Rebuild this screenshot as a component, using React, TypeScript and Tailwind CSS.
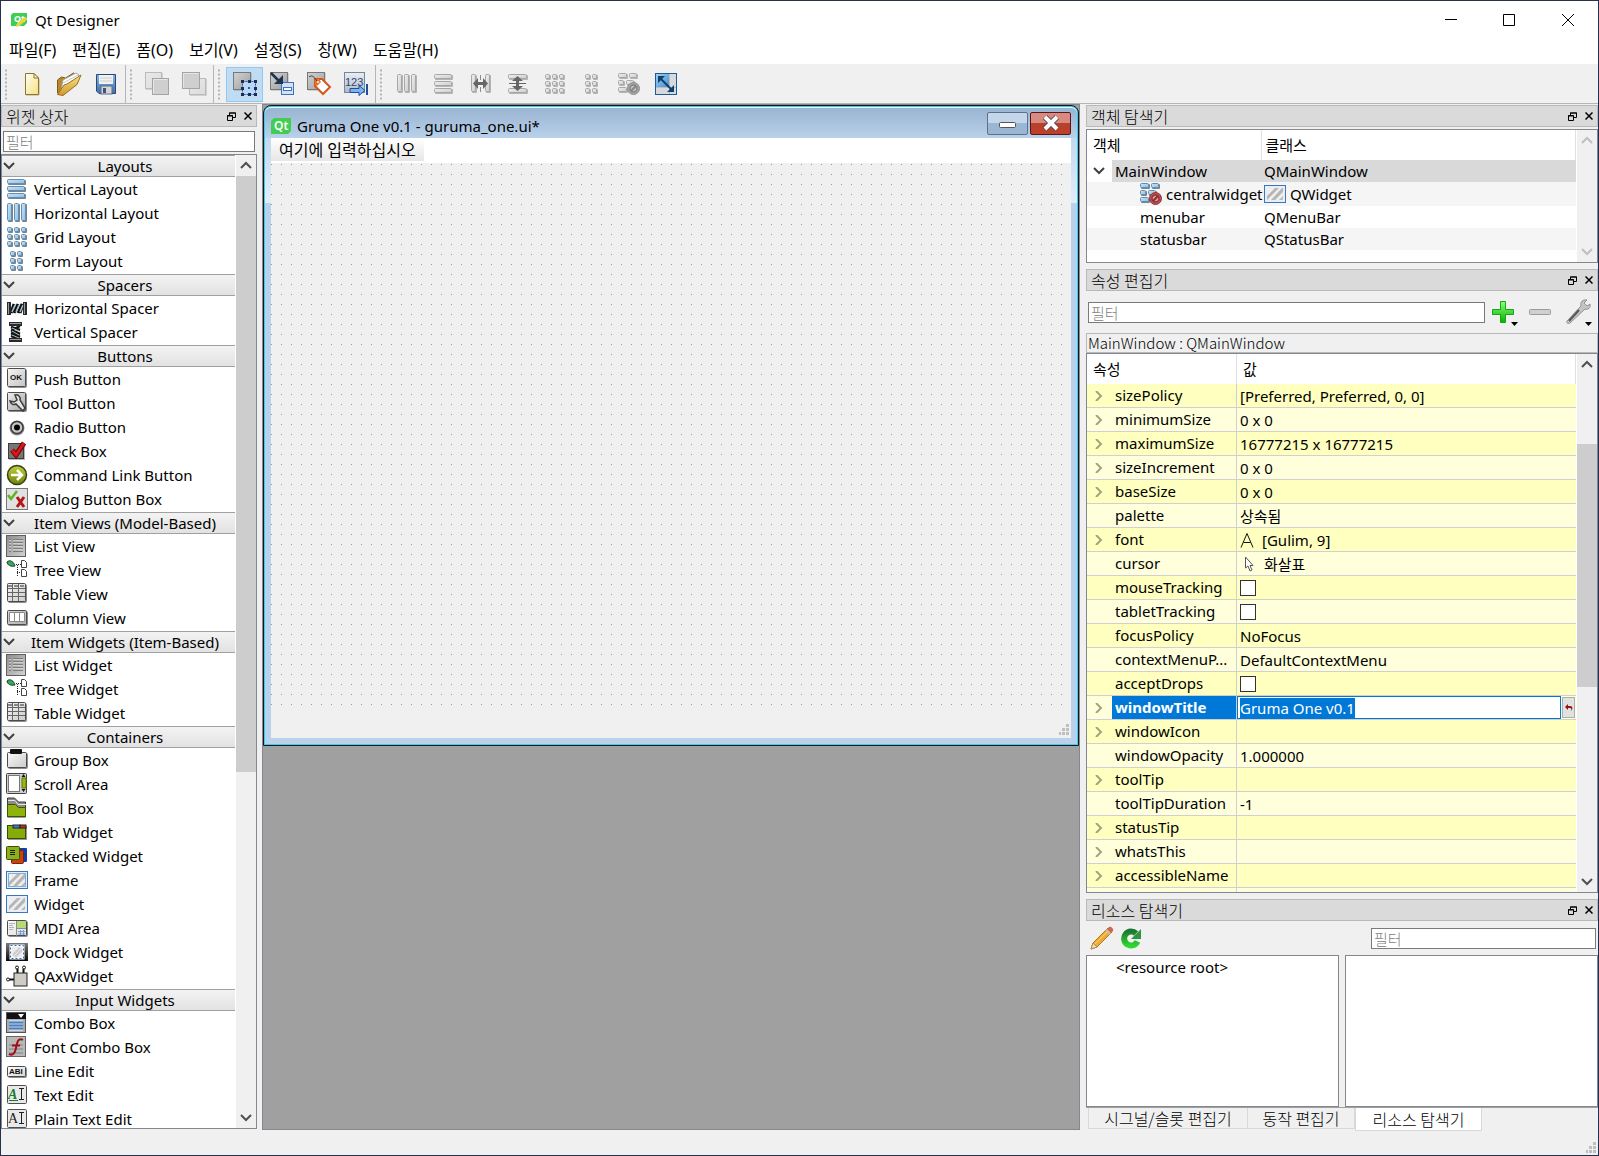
import { useEffect, useId, useRef, type ReactNode } from "react";

const ui = "font-['Noto_Sans','Noto_Sans_CJK_KR',sans-serif] text-[15px] leading-5";
const uiLarge = "font-['Noto_Sans','Noto_Sans_CJK_KR',sans-serif] text-base leading-5";
const thin = "font-['Noto_Sans_CJK_KR',sans-serif] font-light text-[15px] leading-5";
const thinLarge = "font-['Noto_Sans_CJK_KR',sans-serif] font-light text-base leading-5";

function Svg({ w = 22, h = 22, children, className = "" }: { w?: number; h?: number; children: ReactNode; className?: string }) {
  return (
    <svg width={w} height={h} viewBox={`0 0 ${w} ${h}`} className={`shrink-0 ${className}`} aria-hidden="true">
      {children}
    </svg>
  );
}

function Grad({ id, from, to, diagonal = false }: { id: string; from: string; to: string; diagonal?: boolean }) {
  return (
    <linearGradient id={id} x1="0" y1="0" x2={diagonal ? "1" : "0"} y2="1">
      <stop offset="0" stopColor={from} />
      <stop offset="1" stopColor={to} />
    </linearGradient>
  );
}

/* ---------- layout glyphs, shared by the toolbar and the widget box ---------- */

type Cell = [number, number, number, number];

function Cells({ cells, gray = false, children }: { cells: Cell[]; gray?: boolean; children?: ReactNode }) {
  const id = useId();
  return (
    <Svg>
      <Grad id={id} from={gray ? "#f0f0f0" : "#c6e6fa"} to={gray ? "#cccccc" : "#8abfea"} diagonal />
      {cells.map(([x, y, w, h]) => (
        <g key={`${x}-${y}`}>
          <rect x={x + 1} y={y + 1} width={w} height={h} rx="1" fill={gray ? "#b4b4b4" : "#77848f"} />
          <rect x={x + 0.5} y={y + 0.5} width={w - 1} height={h - 1} rx="1" fill={`url(#${id})`} stroke={gray ? "#a6a6a6" : "#6a8cab"} />
        </g>
      ))}
      {children}
    </Svg>
  );
}

const columns: Cell[] = [[1, 1, 5, 18], [8, 1, 5, 18], [15, 1, 5, 18]];
const rows: Cell[] = [[1, 1, 18, 5], [1, 8, 18, 5], [1, 15, 18, 5]];
const grid: Cell[] = [1, 8, 15].flatMap((y) => [1, 8, 15].map((x): Cell => [x, y, 5, 5]));
const form: Cell[] = [1, 8, 15].flatMap((y) => [4, 11].map((x): Cell => [x, y, 5, 5]));
const broken: Cell[] = [[0, 0, 9, 5], [11, 0, 8, 5], [0, 7, 6, 5], [8, 7, 8, 5], [0, 14, 9, 5]];

function Forbidden({ gray = false }: { gray?: boolean }) {
  return (
    <g>
      <circle cx="15.500" cy="15.500" r="6" fill={gray ? "#a9a9a9" : "#b5555a"} stroke={gray ? "#8c8c8c" : "#8c3237"} />
      <circle cx="15.500" cy="15.500" r="3.500" fill={gray ? "#c4c4c4" : "#d4a4a4"} stroke={gray ? "#858585" : "#a32f34"} strokeWidth="1.500" />
      <path d="M13 18 18 13" stroke={gray ? "#858585" : "#8a2c30"} strokeWidth="2" />
    </g>
  );
}

/* ---------- toolbar icons ---------- */

function GrayPane({ x, y, s, light = false }: { x: number; y: number; s: number; light?: boolean }) {
  const id = useId();
  return (
    <g>
      <Grad id={id} from={light ? "#e9e9e9" : "#d2d2d2"} to={light ? "#dcdcdc" : "#9e9e9e"} diagonal />
      <rect x={x + 1} y={y + 1} width={s} height={s} fill="#00000022" />
      <rect x={x + 0.5} y={y + 0.5} width={s - 1} height={s - 1} fill={`url(#${id})`} stroke={light ? "#bababa" : "#777777"} />
    </g>
  );
}

const NewIcon = () => (
  <Svg w={24} h={24}>
    <Grad id="paper" from="#fffef5" to="#f6e07c" diagonal />
    <path d="M5.500 1.500h8.500l4.500 4.500v16.500h-13z" fill="url(#paper)" stroke="#8d7526" />
    <path d="M14 1.500v4.500h4.500z" fill="#fff9d0" stroke="#8d7526" />
    <path d="M19.500 7v16M6 23.500h13" stroke="#d2cfc4" />
  </Svg>
);

const OpenIcon = () => (
  <Svg w={26} h={26}>
    <Grad id="folder" from="#f9e189" to="#d29a2c" />
    <path d="M1.500 22V9l4-3 4 1 8-5 3 2v5L7 24z" fill="#b8872c" stroke="#7e5b18" />
    <path d="M5 19 7 9 20 2l3 2-3 10z" fill="#fff" stroke="#a5a5a5" />
    <path d="M7 12 22 4" stroke="#c8c8c8" />
    <path d="M1.500 23.500 8 14l3-1 14-9-4 9.500L7 24.500z" fill="url(#folder)" stroke="#9a6e1d" />
  </Svg>
);

const SaveIcon = () => (
  <Svg w={24} h={24}>
    <Grad id="disk" from="#86b5e5" to="#3e6fae" />
    <path d="M2.500 2.500h19v19H5l-2.500-2.500z" fill="url(#disk)" stroke="#2b4775" />
    <rect x="5" y="3" width="14" height="9" fill="#f1f1ef" />
    <path d="M6 6h12M6 9h12" stroke="#c9ccd1" />
    <rect x="7" y="14" width="11" height="8" fill="#d2d5da" stroke="#5e6c80" />
    <rect x="9" y="16" width="3" height="5" fill="#415372" />
  </Svg>
);

const FrontIcon = () => (
  <Svg w={26} h={26}>
    <GrayPane x={1} y={1} s={17} light />
    <rect x="8.500" y="7.500" width="16" height="16" fill="#cfcfcf" stroke="#a4a4a4" />
    <path d="M9.500 22.500v-14h14" stroke="#e6e6e6" fill="none" />
  </Svg>
);

const BackIcon = () => (
  <Svg w={26} h={26}>
    <GrayPane x={8} y={7} s={17} light />
    <rect x="1.500" y="1.500" width="17" height="16" fill="#cfcfcf" stroke="#a4a4a4" />
    <path d="M2.500 16.500v-14h15" stroke="#e6e6e6" fill="none" />
  </Svg>
);

const EditWidgetsIcon = () => (
  <Svg w={26} h={26}>
    <GrayPane x={1} y={1} s={18} />
    <rect x="10.500" y="10.500" width="13" height="13" fill="#b9d6fb" stroke="#33548c" strokeDasharray="2 1" />
    {[9, 16, 22].map((x) => [9, 16, 22].map((y) => (x === 16 && y === 16 ? null : <rect key={`${x}${y}`} x={x} y={y} width="3" height="3" fill="#1c2c58" />)))}
    <rect x="16" y="16" width="2" height="2" fill="#2960b0" />
  </Svg>
);

const EditSignalsIcon = () => (
  <Svg w={26} h={26}>
    <GrayPane x={1} y={1} s={18} />
    <rect x="12.500" y="11.500" width="12" height="12" fill="#cfe2fb" stroke="#4470b5" />
    <rect x="14.500" y="16.500" width="8" height="3" fill="#fff" stroke="#4470b5" />
    <path d="M2 2 10 10" stroke="#1c3550" strokeWidth="2.500" />
    <path d="M14 13V4l-9 9z" fill="#1c3550" />
  </Svg>
);

const EditBuddiesIcon = () => (
  <Svg w={26} h={26}>
    <GrayPane x={1} y={1} s={18} />
    <path d="M9 8h7l8 8-7 7-8-8z" fill="#fff" stroke="#d4561f" strokeWidth="2" />
    <path d="M9 8h4l2 3-4 4-2-1z" fill="#e8702a" />
    <path d="M3 6c3-3 6 1 8 4" stroke="#3c3c3c" fill="none" />
    <circle cx="12" cy="11" r="1" fill="#fff" />
  </Svg>
);

const TabOrderIcon = () => (
  <Svg w={26} h={26}>
    <Grad id="taborder" from="#eeeeee" to="#b4b8be" />
    <rect x="1.500" y="1.500" width="20" height="20" fill="url(#taborder)" stroke="#6d87ab" />
    <text x="2" y="15" fontSize="11" fontFamily="Liberation Sans" fill="#1d4a8c">123</text>
    <path d="M7 17.500h9v-3l6 5-6 5v-3H7z" fill="#7fb2f0" stroke="#1f4f96" />
    <path d="M24 13v11" stroke="#1f4f96" strokeWidth="2" />
  </Svg>
);

const SplitHIcon = () => (
  <Cells gray cells={[[1, 1, 5, 18], [15, 1, 5, 18]]}>
    <path d="M10.500 2v17" stroke="#8a8a8a" strokeDasharray="5 7" />
    <path d="M6 10.500h9" stroke="#666" strokeWidth="3" />
    <path d="M3 10.500 8 5v11zM18 10.500 13 5v11z" fill="#666" />
  </Cells>
);

const SplitVIcon = () => (
  <Cells gray cells={[[1, 1, 19, 5], [1, 15, 19, 5]]}>
    <path d="M10.500 6v9" stroke="#666" strokeWidth="3" />
    <path d="M10.500 3 5 8h11zM10.500 18 5 13h11zM2 10h17v1H2z" fill="#666" />
  </Cells>
);

const AdjustIcon = () => (
  <Svg w={24} h={24}>
    <Grad id="adjust" from="#9fd0f5" to="#4690cd" diagonal />
    <rect x="1" y="1" width="22" height="22" fill="#1d5c9b" />
    <rect x="2" y="2" width="20" height="20" fill="#d7d9dc" />
    <rect x="2" y="2" width="13" height="13" fill="url(#adjust)" />
    <path d="M15.500 2v20M2 15.500h20" stroke="#b9bcc0" />
    <path d="M5 5 19 19" stroke="#10406c" strokeWidth="2" />
    <path d="M4 4h7l-7 7zM20 20h-7l7-7z" fill="#10406c" />
  </Svg>
);

/* ---------- widget box icons ---------- */

function Plate({ from = "#f5f5f5", to = "#c4c4c4", x = 1, y = 0, w = 18, h = 18 }: { from?: string; to?: string; x?: number; y?: number; w?: number; h?: number }) {
  const id = useId();
  return (
    <g>
      <Grad id={id} from={from} to={to} diagonal />
      <rect x={x + 1} y={y + 1} width={w + 1} height={h + 1} rx="2" fill="#8d8d8d" />
      <rect x={x + 0.5} y={y + 0.5} width={w} height={h} rx="1" fill={`url(#${id})`} stroke="#4c4c4c" />
    </g>
  );
}

const HSpacer = () => (
  <Svg>
    <path d="M5 16 8 7M8 16l4-9M12 16l4-9M14 16l3-9" stroke="#111" strokeWidth="3" />
    <path d="M6 15 9 8M10 15l3-7M14 15l3-7" stroke="#a4c3d2" strokeWidth="1.500" />
    <rect x="1" y="5" width="4" height="13" fill="#2a2a2a" />
    <rect x="17" y="5" width="4" height="13" fill="#2a2a2a" />
    <path d="M2.500 6v11M18.500 6v11" stroke="#9a9a9a" />
  </Svg>
);

const VSpacer = () => (
  <Svg>
    <path d="M5 6l9 3M5 9l9 4M5 12l9 4M5 15l7 2M14 5 6 9" stroke="#111" strokeWidth="2.500" />
    <path d="M6 7l7 3M6 10l7 4M6 14l7 3" stroke="#a4c3d2" />
    <rect x="3" y="1" width="13" height="4" fill="#2a2a2a" />
    <rect x="3" y="17" width="13" height="4" fill="#2a2a2a" />
    <path d="M4 2.500h11M4 18.500h11" stroke="#9a9a9a" />
  </Svg>
);

const PushIcon = () => (
  <Svg>
    <Plate />
    <text x="4" y="12" fontSize="8" fontWeight="bold" fontFamily="Liberation Sans" fill="#111">OK</text>
  </Svg>
);

const ToolBtnIcon = () => (
  <Svg>
    <Plate from="#ededed" to="#a8a8a8" />
    <path d="M9 3a4 4 0 0 1 5 5l5 8-2 3-7-7a4 4 0 0 1-6-3l4 1 3-2z" fill="#e4e4e4" stroke="#3d3d3d" strokeWidth="1.500" />
  </Svg>
);

const RadioIcon = () => (
  <Svg>
    <circle cx="11" cy="12" r="7.500" fill="#8f8f8f" />
    <circle cx="11" cy="11.500" r="6" fill="#c8c8c8" stroke="#3a3a3a" strokeWidth="1.500" />
    <circle cx="11" cy="11.500" r="3" fill="#000" />
  </Svg>
);

const CheckIcon = () => (
  <Svg>
    <rect x="3" y="4" width="16" height="16" fill="#b5b5b5" />
    <rect x="2.500" y="3.500" width="15" height="15" fill="#777" stroke="#3c3c3c" />
    <path d="M6 10l4 5 8-12" fill="none" stroke="#6e0709" strokeWidth="5" />
    <path d="M6 10l4 5 8-12" fill="none" stroke="#d8171b" strokeWidth="3" />
  </Svg>
);

const CommandIcon = () => (
  <Svg>
    <Grad id="command" from="#c0cf3a" to="#6d8408" />
    <circle cx="11" cy="11" r="9.500" fill="url(#command)" stroke="#3b3f18" strokeWidth="1.500" />
    <path d="M5 11h10M11 6l5 5-5 5" fill="none" stroke="#fff" strokeWidth="2.500" />
  </Svg>
);

const DialogIcon = () => (
  <Svg>
    <rect x="0.500" y="0.500" width="21" height="21" fill="#e1e1e1" stroke="#777" />
    <path d="M2 7l3 4 6-8" stroke="#5fb423" strokeWidth="2.500" fill="none" />
    <path d="M11 9l7 10M18 9l-7 10" stroke="#b4161c" strokeWidth="3" />
  </Svg>
);

const ListIcon = () => (
  <Svg>
    <Grad id="list" from="#8c8c8c" to="#d4d4d4" diagonal />
    <rect x="0.500" y="0.500" width="19" height="21" fill="url(#list)" stroke="#5f5f5f" />
    <path d="M3 4.500h2M7 4.500h10M3 7.500h2M7 7.500h10M3 10.500h2M7 10.500h10M3 13.500h2M7 13.500h10M3 16.500h2M7 16.500h10" stroke="#7d7d7d" />
    <path d="M3 5.500h2M7 5.500h10M3 8.500h2M7 8.500h10M3 11.500h2M7 11.500h10M3 14.500h2M7 14.500h10" stroke="#cfcfcf" />
  </Svg>
);

const TreeIcon = () => (
  <Svg>
    <path d="M1 3c3-3 7 0 8 4-4 1-8-1-8-4z" fill="#3fa35a" stroke="#104a20" />
    <path d="M10 5.500h5M11.500 6v11M11 13.500h4" stroke="#222" strokeDasharray="1 1" fill="none" />
    <path d="M15.500 1.500h3l2 2v5h-5zM15.500 10.500h3l2 2v5h-5z" fill="#fff" stroke="#444" />
  </Svg>
);

const TableIcon = () => (
  <Svg>
    <Plate from="#f3f3f3" to="#cdcdcd" w={18} h={18} />
    <path d="M2 5.500h17M2 9.500h17M2 13.500h17M6.500 1v17M12.500 1v17" stroke="#666" />
    <path d="M2 3h17" stroke="#888" strokeWidth="2" strokeDasharray="4 2" />
  </Svg>
);

const ColumnIcon = () => (
  <Svg>
    <Plate y={3} w={19} h={14} from="#d6d6d6" to="#b0b0b0" />
    <path d="M3.500 5.500h5v9h-5zM8.500 5.500h5v9h-5zM13.500 5.500h5v9h-5z" fill="#fff" stroke="#888" />
  </Svg>
);

const GroupIcon = () => (
  <Svg>
    <Plate y={3} w={19} h={15} from="#fafafa" to="#cbcbcb" />
    <rect x="4" y="0" width="12" height="5" rx="1" fill="#111" />
  </Svg>
);

const ScrollIcon = () => (
  <Svg>
    <rect x="0.500" y="0.500" width="20" height="20" rx="1" fill="#cfcfcf" stroke="#444" />
    <rect x="2.500" y="2.500" width="11" height="16" fill="#fff" stroke="#777" />
    <path d="M17.500 1l2 3h-4zM17.500 19l2-3h-4z" fill="#111" />
    <rect x="16" y="5" width="4" height="10" fill="#97bb12" stroke="#5b7509" />
  </Svg>
);

const ToolBoxIcon = () => (
  <Svg>
    <path d="M1.500 7v-6h7l4 4h7v15h-18z" fill="#8b8b8b" stroke="#3b3b3b" />
    <path d="M2 3.500h7l3 4h8" stroke="#e4e4e4" fill="none" />
    <path d="M1.500 7.500h8l3 3h7v9h-18z" fill="#8fb30c" stroke="#3f5406" />
  </Svg>
);

const TabIcon = () => (
  <Svg>
    <rect x="2" y="5" width="19" height="14" fill="#9a9a9a" />
    <rect x="1.500" y="4.500" width="18" height="13" fill="#86ac0b" stroke="#3a4d06" />
    <rect x="7" y="4" width="7" height="3" fill="#2d86e0" stroke="#222" />
    <rect x="14" y="4" width="6" height="3" fill="#d4271f" stroke="#222" />
  </Svg>
);

const StackIcon = () => (
  <Svg>
    <rect x="9" y="3" width="12" height="14" rx="1" fill="#173ea4" />
    <rect x="5.500" y="5.500" width="12" height="13" rx="1" fill="#c8420d" stroke="#7c2503" />
    <rect x="0.500" y="1.500" width="13" height="13" rx="1" fill="#8db018" stroke="#3f5207" />
    <path d="M4 5.500h5M4 7.500h5M4 9.500h5" stroke="#16230a" />
  </Svg>
);

function Stripes({ inset }: { inset: boolean }) {
  return (
    <Svg>
      <rect x="0.500" y="2.500" width="21" height="17" fill="#e9eef5" stroke="#3a78bd" />
      {inset && <rect x="2.500" y="4.500" width="17" height="13" fill="none" stroke="#87abd4" />}
      <rect x="3" y="5" width="16" height="12" fill="#efefef" />
      <path d="M3 13 11 5h4L3 17zM11 17 19 9v-4h-1L7 17z" fill="#b6b6b6" />
      <path d="M15 17l4-4v3l-1 1z" fill="#b6b6b6" />
    </Svg>
  );
}

const MdiIcon = () => (
  <Svg>
    <Plate y={3} w={19} h={15} from="#fafafa" to="#dedede" />
    <rect x="11" y="4" width="9" height="7" fill="#b6d978" />
    <path d="M3 6.500h6M3 8.500h4M3 10.500h5M3 12.500h4" stroke="#b3b3b3" />
    <path d="M10.500 4v15M11 11.500h9" stroke="#8b8b8b" />
    <path d="M12 14.500h7M12 17h7M14.500 13v5M17.500 13v5" stroke="#6f9fdc" />
  </Svg>
);

const DockIcon = () => (
  <Svg>
    <Grad id="dock" from="#7a7a7a" to="#0a0a0a" />
    <rect x="0" y="2" width="22" height="18" fill="url(#dock)" />
    <rect x="4.500" y="4.500" width="13" height="13" fill="#ececec" stroke="#fff" strokeWidth="2" />
    <rect x="4.500" y="4.500" width="13" height="13" fill="none" stroke="#3769b4" strokeDasharray="2 2" />
    <path d="M7 14l7-7M9 16l7-7" stroke="#cccccc" strokeWidth="2" />
  </Svg>
);

const AxIcon = () => (
  <Svg>
    <path d="M11.500 4v4M17.500 4v4M3 14.500h5" stroke="#111" strokeWidth="2" />
    <circle cx="11" cy="2.500" r="1.500" fill="#fff" stroke="#111" />
    <circle cx="18" cy="2.500" r="1.500" fill="#fff" stroke="#111" />
    <circle cx="2" cy="14.500" r="1.500" fill="#fff" stroke="#111" />
    <rect x="8" y="8" width="13" height="13" fill="#cfccc4" stroke="#222" />
  </Svg>
);

const ComboIcon = () => (
  <Svg>
    <rect x="0.500" y="0.500" width="19" height="20" fill="#aaa" stroke="#555" />
    <rect x="1" y="1" width="19" height="6" fill="#111" />
    <path d="M12 2h6l-3 4z" fill="#fff" />
    <rect x="3" y="8" width="14" height="11" fill="#c4d8ee" />
    <path d="M3 10.500h14M3 13.500h14M3 16.500h14" stroke="#4e7fb8" strokeWidth="2" />
  </Svg>
);

const FontComboIcon = () => (
  <Svg>
    <rect x="0.500" y="0.500" width="19" height="20" fill="#b8b8b8" stroke="#666" />
    <path d="M3 9h14M3 13h14M3 17h14" stroke="#9d9d9d" strokeWidth="2" />
    <path d="M17 4c-5-3-6 3-7 8s-3 8-7 6M6 9.500h8" stroke="#a20f16" strokeWidth="2" fill="none" />
  </Svg>
);

const LineEditIcon = () => (
  <Svg>
    <Plate y={6} w={18} h={10} from="#fff" to="#d7d7d7" />
    <text x="3" y="14" fontSize="8" fontWeight="bold" fontFamily="Liberation Sans" fill="#111">ABI</text>
  </Svg>
);

const TextEditIcon = ({ green = false }: { green?: boolean }) => (
  <Svg>
    <rect x="1.500" y="1.500" width="19" height="18" rx="1" fill="#e9e9e9" stroke="#4f4f4f" />
    <text x="2" y="15" fontSize="14" fontFamily="Liberation Serif" fontStyle={green ? "italic" : "normal"} fontWeight={green ? "bold" : "normal"} fill={green ? "#1f7a2f" : "#222"}>A</text>
    {green && <path d="M3 16.500h9" stroke="#1f7a2f" />}
    <path d="M13 4.500h5M15.500 5v10M13 15.500h5" stroke="#222" />
  </Svg>
);

const sections: { title: string; items: [string, ReactNode][] }[] = [
  { title: "Layouts", items: [
    ["Vertical Layout", <Cells cells={rows} />],
    ["Horizontal Layout", <Cells cells={columns} />],
    ["Grid Layout", <Cells cells={grid} />],
    ["Form Layout", <Cells cells={form} />],
  ] },
  { title: "Spacers", items: [["Horizontal Spacer", <HSpacer />], ["Vertical Spacer", <VSpacer />]] },
  { title: "Buttons", items: [
    ["Push Button", <PushIcon />],
    ["Tool Button", <ToolBtnIcon />],
    ["Radio Button", <RadioIcon />],
    ["Check Box", <CheckIcon />],
    ["Command Link Button", <CommandIcon />],
    ["Dialog Button Box", <DialogIcon />],
  ] },
  { title: "Item Views (Model-Based)", items: [
    ["List View", <ListIcon />],
    ["Tree View", <TreeIcon />],
    ["Table View", <TableIcon />],
    ["Column View", <ColumnIcon />],
  ] },
  { title: "Item Widgets (Item-Based)", items: [
    ["List Widget", <ListIcon />],
    ["Tree Widget", <TreeIcon />],
    ["Table Widget", <TableIcon />],
  ] },
  { title: "Containers", items: [
    ["Group Box", <GroupIcon />],
    ["Scroll Area", <ScrollIcon />],
    ["Tool Box", <ToolBoxIcon />],
    ["Tab Widget", <TabIcon />],
    ["Stacked Widget", <StackIcon />],
    ["Frame", <Stripes inset />],
    ["Widget", <Stripes inset={false} />],
    ["MDI Area", <MdiIcon />],
    ["Dock Widget", <DockIcon />],
    ["QAxWidget", <AxIcon />],
  ] },
  { title: "Input Widgets", items: [
    ["Combo Box", <ComboIcon />],
    ["Font Combo Box", <FontComboIcon />],
    ["Line Edit", <LineEditIcon />],
    ["Text Edit", <TextEditIcon green />],
    ["Plain Text Edit", <TextEditIcon />],
  ] },
];

/* ---------- shared chrome ---------- */

function Chevron({ dir, color = "#404040", className = "" }: { dir: "up" | "down" | "right"; color?: string; className?: string }) {
  const d = { up: "M1 7 6 2l5 5", down: "M1 2l5 5 5-5", right: "M3 0l5 5-5 5" }[dir];
  return (
    <Svg w={12} h={10} className={className}>
      <path d={d} fill="none" stroke={color} strokeWidth="2" />
    </Svg>
  );
}

function DockTitle({ title }: { title: string }) {
  return (
    <header className="flex h-[22px] shrink-0 items-center border border-[#b9b9b9] bg-[#dadada] pr-1 pl-1">
      <h2 className={`${thinLarge} flex-1`}>{title}</h2>
      <button aria-label="분리" className="mr-2 p-0">
        <Svg w={9} h={9}>
          <path d="M2.500 3V1h6v4.500H6M2 1h7M0.500 3.500h5v5h-5zM0 4h6" fill="none" stroke="#000" />
        </Svg>
      </button>
      <button aria-label="닫기" className="p-0">
        <Svg w={8} h={8}>
          <path d="M0.500 0.500l7 7M7.500 0.500l-7 7" stroke="#000" strokeWidth="1.500" />
        </Svg>
      </button>
    </header>
  );
}

function Scroll({ disabled = false, children }: { disabled?: boolean; children?: ReactNode }) {
  const color = disabled ? "#bfbfbf" : "#505050";
  return (
    <div className="flex w-5 shrink-0 flex-col bg-[#f0f0f0]">
      <button aria-label="위로" className="flex h-[21px] items-center justify-center"><Chevron dir="up" color={color} /></button>
      <div className="flex min-h-0 flex-1 flex-col">{children}</div>
      <button aria-label="아래로" className="flex h-[21px] items-center justify-center"><Chevron dir="down" color={color} /></button>
    </div>
  );
}

function Filter({ className = "" }: { className?: string }) {
  return (
    <input aria-label="필터" placeholder="필터" className={`${thin} h-[21px] min-w-0 border border-[#7a7a7a] bg-white px-0.5 outline-none placeholder:text-[#808080] ${className}`} />
  );
}

function Grip() {
  return (
    <Svg w={10} h={11}>
      <path d="M7 0h3v3H7zM3 4h3v3H3zM7 4h3v3H7zM0 8h2v3H0zM3 8h3v3H3zM7 8h3v3H7z" fill="#bfbfbf" />
    </Svg>
  );
}

function ToolGroup({ icons, active, last = false }: { icons: [string, ReactNode][]; active?: number; last?: boolean }) {
  return (
    <div role="toolbar" className={`flex items-center ${last ? "" : "border-r border-[#b5b5b5] pr-px"}`}>
      <Svg w={12} h={34}>
        <path d="M5 2.500v31" stroke="#b5b5b5" strokeWidth="2" strokeDasharray="2 2" />
      </Svg>
      {icons.map(([name, icon], i) => (
        <button key={name} aria-label={name} className={`flex h-[35px] w-[37px] items-center justify-center ${i === active ? "border border-[#90c8f6] bg-[#c0dcf3]" : ""}`}>
          {icon}
        </button>
      ))}
    </div>
  );
}

/* ---------- panels ---------- */

function WidgetBox() {
  return (
    <aside className="flex w-64 shrink-0 flex-col pt-px">
      <DockTitle title="위젯 상자" />
      <Filter className="mx-0.5 mt-1 mb-0.5" />
      <div className="mb-px flex min-h-0 flex-1 border border-[#828790] bg-white">
        <div className="min-w-0 flex-1 overflow-hidden pr-px">
          {sections.map((s) => (
            <section key={s.title}>
              <h3>
                <button className={`${ui} flex h-[22px] w-full items-center border-y border-[#a0a0a0] bg-linear-to-b from-[#f3f3f3] to-[#e2e2e2] pl-px`}>
                  <Chevron dir="down" />
                  <span className="flex-1 text-center">{s.title}</span>
                </button>
              </h3>
              <ul className="pb-px">
                {s.items.map(([name, icon]) => (
                  <li key={name} className={`${ui} flex h-6 items-center gap-1.5 pl-1`}>
                    {icon}
                    {name}
                  </li>
                ))}
              </ul>
            </section>
          ))}
        </div>
        <Scroll>
          <div className="h-[64%] bg-[#cdcdcd]" />
        </Scroll>
      </div>
    </aside>
  );
}

const QtLogo = ({ w = 20, h = 16 }: { w?: number; h?: number }) => (
  <svg width={w} height={h} viewBox="0 0 20 16" aria-hidden="true" className="shrink-0">
    <path d="M3 0h17v13l-3 3H0V3z" fill="#41cd52" />
    <text x="3" y="12" fontSize="12" fontWeight="600" fontFamily="Noto Sans" fill="#fff">Qt</text>
  </svg>
);

function FormWindow() {
  return (
    <main className="min-w-0 flex-1 border border-[#828790] bg-[#a0a0a0]">
      <div className="rounded-t-lg border border-[#15181c] bg-[#35d0ee] p-px">
        <div className="flex flex-col rounded-t-md border-t border-white bg-[linear-gradient(#c4d8ee_30px,#e3edf8_95px,#b9d1ea_95px)] px-1.5 pb-1.5">
          <div className="-mx-1.5 flex h-[30px] items-center rounded-t-md bg-linear-to-b from-[#99b4d1] to-[#b9d1ea] px-1.5">
            <div className="flex flex-1 items-center gap-1.5 pt-1.5">
              <QtLogo />
              <h1 className={ui}>Gruma One v0.1 - guruma_one.ui*</h1>
            </div>
            <button aria-label="최소화" className="mr-0.5 flex h-[23px] w-[41px] items-center justify-center rounded-xs border border-[#5c718c] bg-linear-to-b from-[#c4d6ea] from-50% to-[#9bb6d4] to-50%">
              <Svg w={18} h={12}><rect x="0.500" y="5.500" width="16" height="5" rx="1" fill="#fff" stroke="#555" /></Svg>
            </button>
            <button aria-label="닫기" className="flex h-[23px] w-[41px] items-center justify-center rounded-xs border border-[#5a1420] bg-linear-to-b from-[#d98a7e] from-50% to-[#bb4029] to-50%">
              <Svg w={20} h={18}>
                <path d="M4 3l12 12M16 3 4 15" stroke="#55464a" strokeWidth="6" />
                <path d="M4 3l12 12M16 3 4 15" stroke="#fff" strokeWidth="4" />
              </Svg>
            </button>
          </div>
          <div className="flex h-[25px] items-start bg-white">
            <button className={`${uiLarge} h-[23px] bg-linear-to-b from-white to-[#e6e6e6] px-2`}>여기에 입력하십시오</button>
          </div>
          <div className="flex h-[575px] flex-col bg-[#f0f0f0]">
            <svg width="100%" height="551" aria-hidden="true">
              <pattern id="dots" width="10" height="10" patternUnits="userSpaceOnUse">
                <rect x="0" y="1" width="1" height="1" fill="#9a9a9a" />
              </pattern>
              <rect width="100%" height="551" fill="url(#dots)" />
            </svg>
            <div className="flex justify-end pt-2.5 pr-0.5"><Grip /></div>
          </div>
        </div>
      </div>
    </main>
  );
}

function ObjectInspector() {
  return (
    <section className="flex flex-col">
      <DockTitle title="객체 탐색기" />
      <div className="mt-0.5 flex h-[134px] border border-[#828790] bg-white">
        <div className="flex-1 pr-px">
          <table className={`${ui} w-full table-fixed border-collapse text-left`}>
            <colgroup><col className="w-[174px]" /><col /></colgroup>
            <thead>
              <tr className="h-[30px]">
                <th className="border-r border-[#e0e0e0] pl-1.5 font-normal">객체</th>
                <th className="border-r border-[#e0e0e0] pl-1 font-normal">클래스</th>
              </tr>
            </thead>
            <tbody>
              <tr className="h-[22px]">
                <td className="p-0">
                  <div className="flex h-[22px] items-center pl-1.5">
                    <Chevron dir="down" />
                    <span className="ml-[7px] flex-1 bg-[#d9d9d9] py-px pl-[3px]">MainWindow</span>
                  </div>
                </td>
                <td className="bg-[#d9d9d9] pl-[3px]">QMainWindow</td>
              </tr>
              <tr className="h-6 bg-[#f5f5f5]">
                <td className="p-0">
                  <div className="flex items-center gap-1 pl-[53px]">
                    <Cells cells={broken}><Forbidden /></Cells>centralwidget
                  </div>
                </td>
                <td className="p-0">
                  <div className="flex items-center gap-1 pl-[3px]"><Stripes inset={false} />QWidget</div>
                </td>
              </tr>
              <tr className="h-[22px]">
                <td className="pl-[53px]">menubar</td>
                <td className="pl-[3px]">QMenuBar</td>
              </tr>
              <tr className="h-[22px] bg-[#f5f5f5]">
                <td className="pl-[53px]">statusbar</td>
                <td className="pl-[3px]">QStatusBar</td>
              </tr>
            </tbody>
          </table>
        </div>
        <Scroll disabled />
      </div>
    </section>
  );
}

type Prop = { name: string; value?: string; open?: boolean; kind?: "check" | "font" | "cursor" | "edit" };

const props: Prop[] = [
  { name: "sizePolicy", value: "[Preferred, Preferred, 0, 0]", open: true },
  { name: "minimumSize", value: "0 x 0", open: true },
  { name: "maximumSize", value: "16777215 x 16777215", open: true },
  { name: "sizeIncrement", value: "0 x 0", open: true },
  { name: "baseSize", value: "0 x 0", open: true },
  { name: "palette", value: "상속됨" },
  { name: "font", value: "[Gulim, 9]", open: true, kind: "font" },
  { name: "cursor", value: "화살표", kind: "cursor" },
  { name: "mouseTracking", kind: "check" },
  { name: "tabletTracking", kind: "check" },
  { name: "focusPolicy", value: "NoFocus" },
  { name: "contextMenuP...", value: "DefaultContextMenu" },
  { name: "acceptDrops", kind: "check" },
  { name: "windowTitle", value: "Gruma One v0.1", open: true, kind: "edit" },
  { name: "windowIcon", open: true },
  { name: "windowOpacity", value: "1.000000" },
  { name: "toolTip", open: true },
  { name: "toolTipDuration", value: "-1" },
  { name: "statusTip", open: true },
  { name: "whatsThis", open: true },
  { name: "accessibleName", open: true },
  { name: "" },
];

function TitleEditor({ value }: { value?: string }) {
  const ref = useRef<HTMLInputElement>(null);
  useEffect(() => {
    ref.current?.focus();
    ref.current?.select();
  }, []);
  return (
    <div className="flex h-[23px] items-center gap-px pr-px">
      <input ref={ref} aria-label="windowTitle" defaultValue={value} className={`${ui} h-[23px] min-w-0 flex-1 border border-[#0078d7] bg-white pl-0.5 outline-none selection:bg-[#0078d7] selection:text-white`} />
      <button aria-label="초기화" className="flex h-[21px] w-[13px] items-center justify-center border border-[#adadad] bg-[#e1e1e1]">
        <Svg w={8} h={8}><path d="M0 3l3-3v2h2c3 0 3 3 1 5 1-2 0-3-1-3H3v2z" fill="#9b1010" /></Svg>
      </button>
    </div>
  );
}

function PropValue({ p }: { p: Prop }) {
  if (p.kind === "edit") return <TitleEditor value={p.value} />;
  if (p.kind === "check")
    return <input type="checkbox" aria-label={p.name} className="ml-[3px] block size-4 appearance-none border border-[#333] bg-white" />;
  return (
    <div className="flex items-center pl-[3px]">
      {p.kind === "font" && <Svg w={22} h={16}><path d="M1 15.500 7 1.500l6 14M3.500 10.500h7" fill="none" stroke="#111" /></Svg>}
      {p.kind === "cursor" && (
        <Svg w={24} h={16}><path d="M5.500 1v11l2.500-2 2 5 2-1-2-4.500h3z" fill="#fff" stroke="#555" /></Svg>
      )}
      {p.value}
    </div>
  );
}

function PropertyEditor() {
  return (
    <section className="mt-1.5 flex min-h-0 flex-1 flex-col">
      <DockTitle title="속성 편집기" />
      <div className="flex h-[42px] shrink-0 items-center pl-0.5">
        <Filter className="flex-1" />
        <button aria-label="추가" className="ml-1.5 flex w-[30px] items-end">
          <Svg w={30} h={28}>
            <Grad id="plus" from="#8dff7a" to="#00b400" />
            <path d="M9.500 3.500h5v8h8v5h-8v8h-5v-8h-8v-5h8z" fill="url(#plus)" stroke="#17a517" />
            <path d="M20 24h7l-3.500 4z" fill="#000" />
          </Svg>
        </button>
        <button aria-label="제거" className="ml-2 flex w-6">
          <Svg w={24} h={8}><rect x="0.500" y="1.500" width="21" height="5" rx="1" fill="#d0d0d0" stroke="#9a9a9a" /></Svg>
        </button>
        <button aria-label="설정" className="mr-[5px] ml-3 flex">
          <Svg w={28} h={28}>
            <path d="M2 23 16 8c-1-4 2-7 6-6l-3 3 3 3 3-2c1 4-2 6-5 5L5 25c-2 1-4 0-3-2z" fill="#c4c4c4" stroke="#929292" />
            <path d="M4 23 14 12" stroke="#555" strokeWidth="2" />
            <path d="M20 24h7l-3.500 4z" fill="#000" />
          </Svg>
        </button>
      </div>
      <p className={`${thin} flex h-5 shrink-0 items-center border border-[#b9b9b9] pl-px`}>MainWindow : QMainWindow</p>
      <div className="flex min-h-0 flex-1 border border-[#828790] bg-white">
        <div className="min-w-0 flex-1 overflow-hidden pr-px">
          <table className={`${ui} w-full table-fixed border-separate border-spacing-0 text-left`}>
            <colgroup><col className="w-[150px]" /><col /></colgroup>
            <thead>
              <tr className="h-[30px]">
                <th className="border-r border-[#e0e0e0] p-0 pl-1.5 font-normal">속성</th>
                <th className="border-r border-[#e0e0e0] p-0 pl-1.5 font-normal">값</th>
              </tr>
            </thead>
            <tbody>
              {props.map((p, i) => (
                <tr key={p.name} className={`h-6 ${i % 2 ? "bg-[#ffffdc]" : "bg-[#ffffbf]"}`}>
                  <td className="border-r border-b border-[#d0d0d0] p-0">
                    <div className="flex items-center">
                      <span className="flex w-[25px] justify-center pr-px">{p.open && <Chevron dir="right" color="#a3a37c" />}</span>
                      <span className={`h-[23px] flex-1 pt-px pl-[3px] leading-[21px] ${p.kind === "edit" ? "bg-[#0078d7] font-bold text-white" : ""}`}>{p.name}</span>
                    </div>
                  </td>
                  <td className="border-b border-[#d0d0d0] p-0"><PropValue p={p} /></td>
                </tr>
              ))}
            </tbody>
          </table>
        </div>
        <Scroll>
          <div className="flex-[69]" />
          <div className="flex-[242] bg-[#cdcdcd]" />
          <div className="flex-[184]" />
        </Scroll>
      </div>
    </section>
  );
}

function ResourceBrowser() {
  return (
    <section className="mt-1.5 flex shrink-0 flex-col">
      <DockTitle title="리소스 탐색기" />
      <div className="flex h-[34px] items-center gap-1.5 pr-0.5 pl-1">
        <button aria-label="편집">
          <Svg w={24} h={24}>
            <path d="M1 23 3 17 18 2l4 4L7 21z" fill="#f0aa34" stroke="#b57618" />
            <path d="M1 23 3 17l4 4z" fill="#f3dfb8" stroke="#a98a50" />
            <path d="M17 3l2-2c2-1 5 2 4 4l-2 2z" fill="#d0684e" />
            <path d="M16 4l4 4" stroke="#b9c0c8" strokeWidth="2" />
            <path d="M5 18 17 6" stroke="#fbd681" />
          </Svg>
        </button>
        <button aria-label="새로 고침">
          <Svg>
            <Grad id="reload" from="#1c7a30" to="#2fd62f" />
            <path d="M17.500 14.500a7 7 0 1 1-1.500-8" fill="none" stroke="url(#reload)" strokeWidth="6" />
            <path d="M21 2v10H11z" fill="#2d9440" />
          </Svg>
        </button>
        <Filter className="ml-auto w-[225px]" />
      </div>
      <div className="grid h-[152px] grid-cols-2 gap-1.5">
        <div className={`${ui} border border-[#828790] bg-white pt-px pl-[29px]`}>&lt;resource root&gt;</div>
        <div className="border border-[#828790] bg-white" />
      </div>
      <div role="tablist" className={`${thinLarge} flex h-[23px] items-start border-t border-[#a0a0a0] pl-0.5`}>
        <button role="tab" aria-selected="false" className="h-[21px] w-40 border border-t-0 border-[#d9d9d9] leading-[18px]">시그널/슬롯 편집기</button>
        <button role="tab" aria-selected="false" className="h-[21px] w-[107px] border border-t-0 border-l-0 border-[#d9d9d9] leading-[18px]">동작 편집기</button>
        <button role="tab" aria-selected="true" className="h-[23px] w-[127px] border border-t-0 border-[#d9d9d9] bg-white">리소스 탐색기</button>
      </div>
    </section>
  );
}

export default function App() {
  return (
    <div className="flex h-screen flex-col overflow-hidden border border-[#26304d] bg-[#f0f0f0] text-black">
      <header className="flex h-[37px] shrink-0 items-center bg-white pl-[10px]">
        <Svg w={18} h={16}>
          <path d="M2 1h14v10l-3 3H0V3z" fill="#41cd52" />
          <text x="3" y="10" fontSize="9" fontWeight="bold" fontFamily="Noto Sans" fill="#fff">Qt</text>
          <path d="M5 15l1-3 8-7 2 2-8 7z" fill="#f5d02c" stroke="#e8e8a0" strokeWidth="0.500" />
        </Svg>
        <span className={`${ui} ml-1.5 flex-1`}>Qt Designer</span>
        <button aria-label="최소화" className="flex h-full w-[58px] items-center justify-center"><Svg w={12} h={12}><path d="M0 5.500h12" stroke="#000" /></Svg></button>
        <button aria-label="최대화" className="flex h-full w-[58px] items-center justify-center"><Svg w={12} h={12}><path d="M0.500 0.500h11v11h-11z" fill="none" stroke="#000" /></Svg></button>
        <button aria-label="닫기" className="flex h-full w-[60px] items-center justify-center"><Svg w={12} h={12}><path d="M0 0l12 12M12 0 0 12" stroke="#000" /></Svg></button>
      </header>
      <nav className={`${uiLarge} flex h-[27px] shrink-0 items-center gap-4 border-b border-[#f0f0f0] bg-white pb-0.5 pl-2`}>
        {["파일(F)", "편집(E)", "폼(O)", "보기(V)", "설정(S)", "창(W)", "도움말(H)"].map((m) => <button key={m}>{m}</button>)}
      </nav>
      <div className="flex h-[39px] shrink-0 border-b border-[#b5b5b5]">
        <ToolGroup icons={[["새로 만들기", <NewIcon />], ["열기", <OpenIcon />], ["저장", <SaveIcon />]]} />
        <ToolGroup icons={[["앞으로", <FrontIcon />], ["뒤로", <BackIcon />]]} />
        <ToolGroup active={0} icons={[["위젯 편집", <EditWidgetsIcon />], ["시그널/슬롯 편집", <EditSignalsIcon />], ["버디 편집", <EditBuddiesIcon />], ["탭 순서 편집", <TabOrderIcon />]]} />
        <ToolGroup
          last
          icons={[
            ["수평 배치", <Cells gray cells={columns} />],
            ["수직 배치", <Cells gray cells={rows} />],
            ["수평 분할", <SplitHIcon />],
            ["수직 분할", <SplitVIcon />],
            ["격자 배치", <Cells gray cells={grid} />],
            ["폼 배치", <Cells gray cells={form} />],
            ["배치 해제", <Cells gray cells={broken}><Forbidden gray /></Cells>],
            ["크기 조정", <AdjustIcon />],
          ]}
        />
      </div>
      <div className="flex min-h-0 flex-1">
        <WidgetBox />
        <div className="w-[5px] shrink-0" />
        <FormWindow />
        <div className="w-1.5 shrink-0" />
        <aside className="flex w-[512px] shrink-0 flex-col pt-px">
          <ObjectInspector />
          <PropertyEditor />
          <ResourceBrowser />
        </aside>
      </div>
      <footer className="flex h-[25px] shrink-0 items-end justify-end pr-0.5 pb-0.5"><Grip /></footer>
    </div>
  );
}
